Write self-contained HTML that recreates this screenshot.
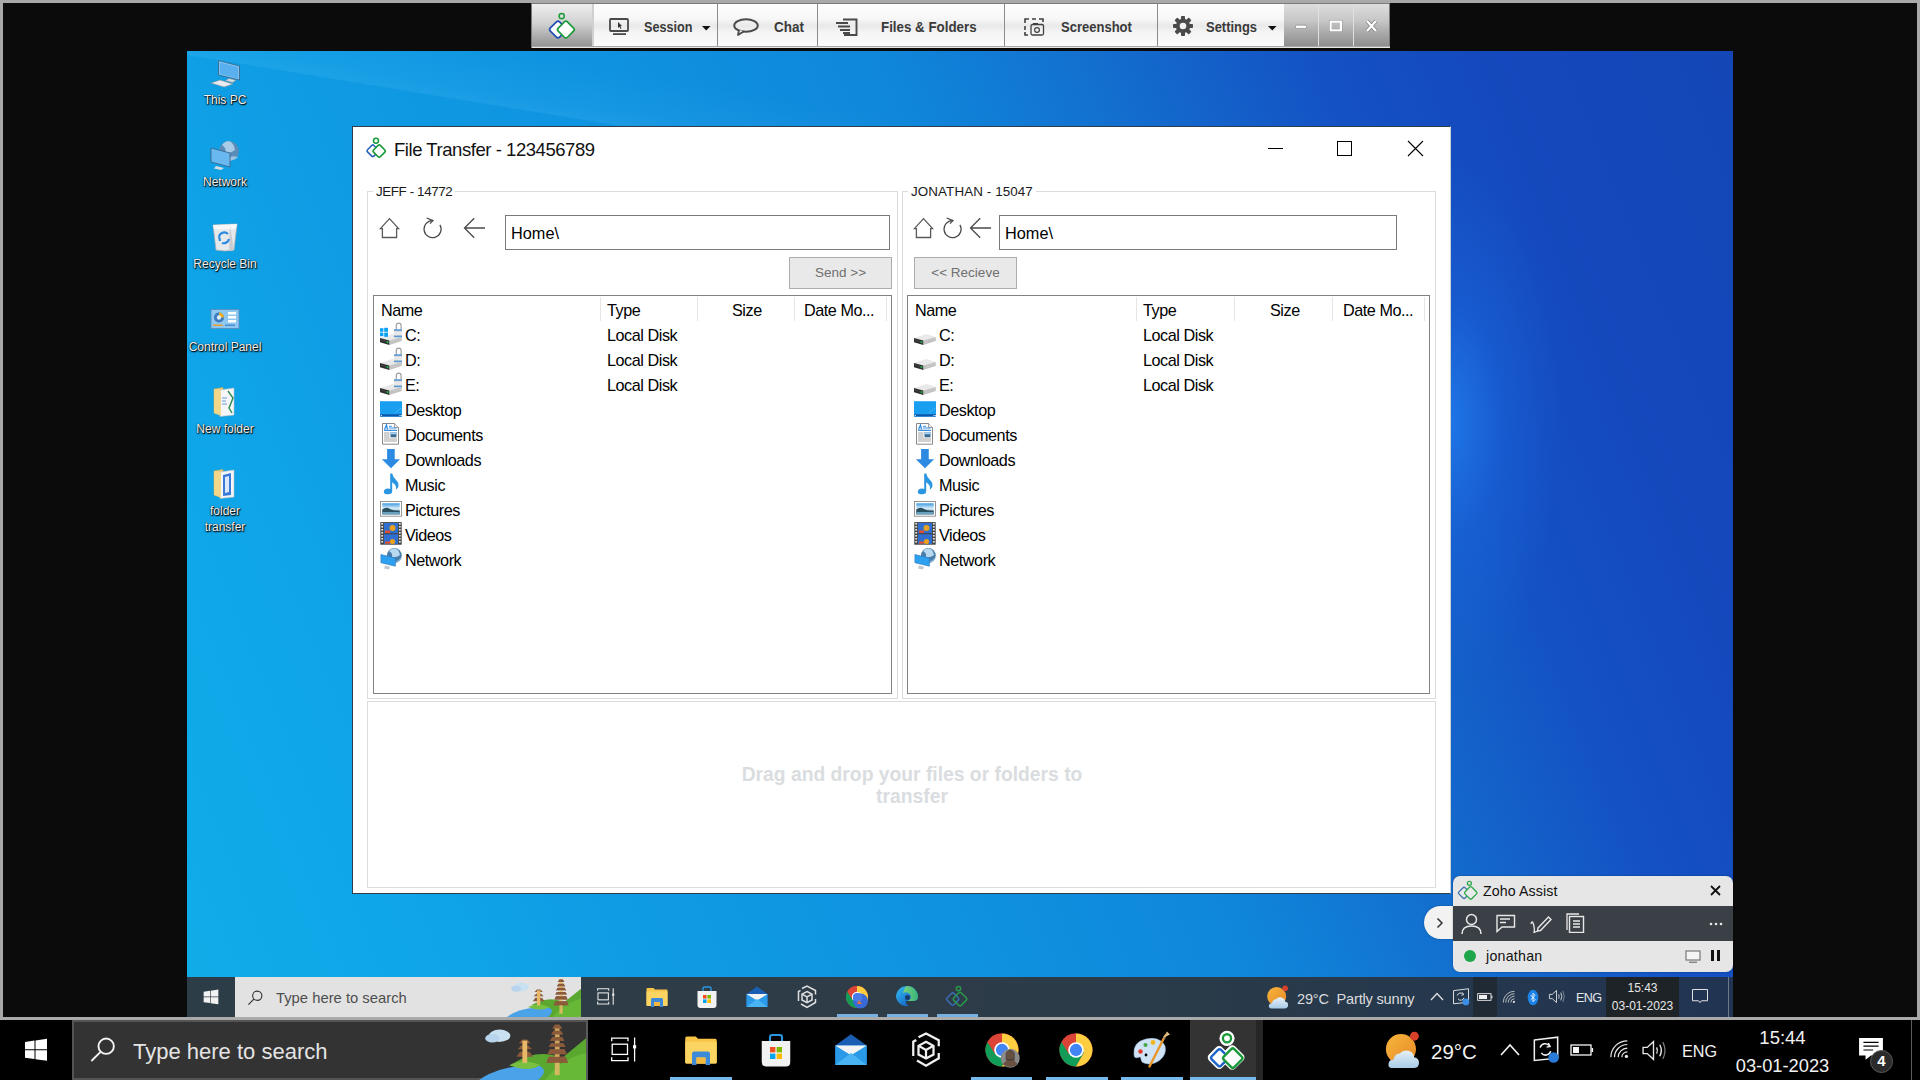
<!DOCTYPE html>
<html><head><meta charset="utf-8">
<style>
*{margin:0;padding:0;box-sizing:border-box}
html,body{width:1920px;height:1080px;overflow:hidden}
body{position:relative;background:#0b0b0b;font-family:"Liberation Sans",sans-serif;color:#000}
.abs{position:absolute}
#bt{left:0;top:0;width:1920px;height:3px;background:#a9a9a9}
#bl{left:0;top:0;width:3px;height:1020px;background:#a9a9a9}
#br{left:1917px;top:0;width:3px;height:1020px;background:#a9a9a9}
#bb{left:0;top:1017px;width:1920px;height:3px;background:#aaaaaa}
#desk{left:187px;top:51px;width:1546px;height:926px;overflow:hidden;
 background:radial-gradient(ellipse 110px 260px at 1265px 370px,rgba(34,128,240,.75) 0%,rgba(30,110,230,.35) 45%,rgba(20,80,200,0) 100%),
 linear-gradient(68deg,#10ace8 0%,#0fa5e8 13%,#0f9de4 22%,#0f93e0 40%,#0f86da 56%,#1370cf 66%,#1452c4 78%,#1448bc 88%,#1446b6 100%)}
#itb{left:187px;top:977px;width:1546px;height:40px;background:linear-gradient(90deg,#2d3d48 0%,#2e3c47 45%,#283a4a 70%,#213452 100%)}
#otb{left:0;top:1020px;width:1920px;height:60px;background:#000}

#tbar{left:531px;top:3px;width:859px;height:45px;background:#7a7a7a}
#tbar .b{position:absolute;top:1px;height:42px;background:linear-gradient(#fefefe 0%,#f7f7f7 35%,#e9e9e9 52%,#f5f5f5 68%,#fbfbfb 100%)}
#tbar .sep{position:absolute;top:1px;width:1px;height:42px;background:#8c8c8c}
#tbar .lbl{position:absolute;top:2px;height:42px;line-height:42px;font-weight:bold;font-size:15.5px;color:#3a3a3a;white-space:nowrap;transform-origin:0 50%}
#tbar .g{position:absolute;top:1px;height:42px;background:linear-gradient(#dedede 0%,#c6c6c6 40%,#a8a8a8 70%,#8e8e8e 100%)}
#tbar .under{position:absolute;left:1px;top:43px;width:858px;height:2px;background:linear-gradient(#a8a8a8 50%,#e6e6e6 50%)}

/* window */
#win{left:352px;top:126px;width:1099px;height:768px;background:#fff;border:1px solid #2d3d4d;border-right-color:#c8d0d8}
.t{position:absolute;white-space:nowrap;line-height:1}
.gb{position:absolute;border:1px solid #dcdcdc}
.gl{position:absolute;background:#fff;padding:0 3px;font-size:13.4px;letter-spacing:-0.4px;color:#1a1a1a;line-height:14px}
.pathbox{position:absolute;border:1px solid #7a7a7a;background:#fff}
.btn{position:absolute;border:1px solid #adadad;background:#e9e9e9;color:#6f6f6f;font-size:13.5px;text-align:center}
.list{position:absolute;border:1px solid #828282;background:#fff;overflow:hidden}
.hsep{position:absolute;width:1px;height:24px;background:#e5e5e5}
.row{position:absolute;font-size:16.2px;letter-spacing:-0.45px;color:#000;line-height:18px;white-space:nowrap}
.dlbl{position:absolute;width:90px;text-align:center;font-size:12px;line-height:14px;color:#f4f4f4;text-shadow:0 0 1px #000,1px 1px 1px rgba(0,0,0,.9),0 1px 2px rgba(0,0,0,.6)}
</style></head><body>
<div id="bt" class="abs"></div><div id="bl" class="abs"></div><div id="br" class="abs"></div><div id="desk" class="abs"><div class="abs" style="left:-60px;top:-62px;width:800px;height:70px;transform:rotate(9.3deg);transform-origin:0 0;background:linear-gradient(180deg,rgba(120,210,255,0) 0%,rgba(120,210,255,.07) 60%,rgba(120,210,255,.12) 78%,rgba(10,140,220,0) 80%)"></div></div><svg class="abs" style="left:208px;top:58px" width="36" height="32" viewBox="0 0 36 32"><path d="M10.5 2.5 L31.5 8 L31.5 22 L10.5 17 Z" fill="#7cc4f4" stroke="#3a6a90" stroke-width="0.9"/><path d="M12 4.5 L30 9.2 L30 20.5 L12 16 Z" fill="#5ab0ee"/><path d="M21 20.5 L28 22.3 L24.5 24.5 L17.5 22.5 Z" fill="#d8dde2" stroke="#8a9098" stroke-width="0.5"/><path d="M3 25 L12 22 L25 26 L16 29 Z" fill="#e8ecf0" stroke="#8a9098" stroke-width="0.6"/></svg><div class="dlbl" style="left:180px;top:93px">This PC</div><svg class="abs" style="left:208px;top:139px" width="36" height="32" viewBox="0 0 36 32"><circle cx="21" cy="12" r="10" fill="#5a8cb8"/><path d="M14 6 Q19 9 17 14 Q22 15 27 11 Q26 4 21 2 Q17 2 14 6Z" fill="#a8cce8"/><path d="M19 19 Q24 16 30 18 Q27 21 21 22Z" fill="#9cc0e0"/><path d="M3 9 L22 14 L22 28 L3 23 Z" fill="#6ab8f0" stroke="#3a6a90" stroke-width="0.9"/><path d="M8 27 L16 29 L13 31 L6 29.5 Z" fill="#d8dde2"/></svg><div class="dlbl" style="left:180px;top:175px">Network</div><svg class="abs" style="left:208px;top:220px" width="34" height="34" viewBox="0 0 34 34"><path d="M5 5 L29 4 L26 30 Q17 32 8 30 Z" fill="#e6e9ec" stroke="#a8adb2" stroke-width="0.8"/><path d="M5 5 L29 4 L28 9 L6 9.5 Z" fill="#f6f7f8"/><path d="M22 6 L26 30 Q24 31 21 31 Z" fill="#c8ccd0"/><path d="M11 16 A5.5 5.5 0 0 1 20 14 M21 19 A5.5 5.5 0 0 1 14 23 M12 21 L11 16" fill="none" stroke="#2a8ae0" stroke-width="2.2"/></svg><div class="dlbl" style="left:180px;top:257px">Recycle Bin</div><svg class="abs" style="left:209px;top:307px" width="32" height="24" viewBox="0 0 32 24"><rect x="2" y="2.5" width="28" height="19" fill="#8ec8f0" stroke="#5a8ab8" stroke-width="0.8"/><circle cx="10" cy="10.5" r="5" fill="#3a7ac0"/><path d="M10 10.5 V5.5 A5 5 0 0 1 15 10.5 Z" fill="#f0b020"/><circle cx="10" cy="10.5" r="2.2" fill="#dbeefc"/><rect x="19" y="5" width="8" height="2.5" fill="#fff"/><rect x="19" y="9" width="8" height="2.5" fill="#fff"/><rect x="19" y="13" width="8" height="2.5" fill="#fff"/><rect x="4" y="17.5" width="10" height="1.5" fill="#e8a030"/><rect x="16" y="17.5" width="10" height="1.5" fill="#4a8ad0"/></svg><div class="dlbl" style="left:180px;top:340px">Control Panel</div><svg class="abs" style="left:210px;top:386px" width="30" height="32" viewBox="0 0 30 32"><path d="M4 3 L13 1.5 L13 29 L4 27 Z" fill="#f0d080" stroke="#c8a850" stroke-width="0.6"/><path d="M10 4 L24 2 L24 29 L10 30.5 Z" fill="#f4f6f8" stroke="#b8bcc0" stroke-width="0.6"/><path d="M18 5 L23 12 L19 22 L22 27" fill="none" stroke="#2a8a50" stroke-width="1.4"/><path d="M12 12 H17 M12 15 H16 M12 18 H17" stroke="#4a8ad0" stroke-width="0.8"/><path d="M4 3 L11 4.5 L11 30 L4 27 Z" fill="#f2d78a" opacity="0.9"/></svg><div class="dlbl" style="left:180px;top:422px">New folder</div><svg class="abs" style="left:210px;top:468px" width="30" height="32" viewBox="0 0 30 32"><path d="M4 3 L13 1.5 L13 29 L4 27 Z" fill="#f0d080" stroke="#c8a850" stroke-width="0.6"/><path d="M10 4 L24 2 L24 29 L10 30.5 Z" fill="#f4f6f8" stroke="#b8bcc0" stroke-width="0.6"/><path d="M13 7 L21 5 L21 27 L13 28 Z" fill="#3a7ad8"/><path d="M15 9 L19 8 L19 24 L15 25 Z" fill="#dbe8f8"/><path d="M4 3 L11 4.5 L11 30 L4 27 Z" fill="#f2d78a" opacity="0.9"/></svg><div class="dlbl" style="left:180px;top:503px;line-height:16px">folder<br>transfer</div><div id="itb" class="abs"></div><div id="bb" class="abs"></div><div id="otb" class="abs"></div><div id="tbar" class="abs">
 <div class="g" style="left:1px;width:60px;background:linear-gradient(#eeeeee 0%,#d2d2d2 45%,#a9a9a9 80%,#959595 100%)">
  <svg width="60" height="42" viewBox="0 0 60 42" style="position:absolute;left:0;top:0">
   <circle cx="29.7" cy="12.1" r="2.6" fill="none" stroke="#1a9a3a" stroke-width="1.5"/>
   <rect x="19.5" y="19" width="13" height="13" rx="2.2" transform="rotate(45 26 25.5)" fill="#fff" stroke="#1f4fb0" stroke-width="1.7"/>
   <rect x="27.4" y="19.1" width="13" height="13" rx="2.2" transform="rotate(45 33.9 25.6)" fill="#fff" stroke="#1a9a3a" stroke-width="1.7"/>
  </svg>
 </div>
 <div class="sep" style="left:61px;background:#d0d0d0;width:2px"></div>
 <div class="b" style="left:63px;width:123px">
  <svg width="22" height="18" viewBox="0 0 22 18" style="position:absolute;left:15px;top:14px">
   <rect x="1" y="1" width="18" height="12" rx="1" fill="none" stroke="#4a4a4a" stroke-width="1.8"/>
   <rect x="4" y="15.2" width="13" height="1.8" fill="#4a4a4a"/>
   <path d="M9 4 L9 10 L10.4 8.7 L11.6 11 L12.5 10.5 L11.3 8.3 L13 8 Z" fill="#333"/>
  </svg>
  <div class="lbl" style="left:50px;transform:scaleX(0.815)">Session</div>
  <svg width="10" height="6" style="position:absolute;left:108px;top:22px"><path d="M0 0 L8.5 0 L4.25 4.5 Z" fill="#111"/></svg>
 </div>
 <div class="sep" style="left:186px"></div>
 <div class="b" style="left:187px;width:99px">
  <svg width="28" height="18" viewBox="0 0 28 18" style="position:absolute;left:15px;top:14px">
   <ellipse cx="13" cy="7.5" rx="11.8" ry="6.3" fill="none" stroke="#4a4a4a" stroke-width="1.9"/>
   <path d="M6 12 L5 17 L11 13.2" fill="#f4f4f4" stroke="#4a4a4a" stroke-width="1.8" stroke-linejoin="round"/>
  </svg>
  <div class="lbl" style="left:56px;transform:scaleX(0.87)">Chat</div>
 </div>
 <div class="sep" style="left:286px"></div>
 <div class="b" style="left:287px;width:186px">
  <svg width="24" height="18" viewBox="0 0 24 18" style="position:absolute;left:17px;top:14px">
   <path d="M8 1.5 H21.5 V17 H9" fill="none" stroke="#4a4a4a" stroke-width="1.9"/>
   <path d="M1 5 H13 M3 8.5 H15 M5 12 H15 M8 15 H15" stroke="#4a4a4a" stroke-width="1.9"/>
  </svg>
  <div class="lbl" style="left:63px;transform:scaleX(0.86)">Files &amp; Folders</div>
 </div>
 <div class="sep" style="left:473px"></div>
 <div class="b" style="left:474px;width:152px">
  <svg width="22" height="18" viewBox="0 0 22 18" style="position:absolute;left:19px;top:14px">
   <path d="M1 5 V1 H5 M8 1 H12 M15 1 H19 V4 M1 8 V12 M1 14 V17 H4" fill="none" stroke="#404040" stroke-width="1.6"/>
   <rect x="7" y="6.5" width="12.5" height="10.5" rx="1.5" fill="none" stroke="#404040" stroke-width="1.3"/>
   <rect x="9" y="5" width="5" height="1.6" fill="#404040"/>
   <circle cx="13" cy="12" r="2.4" fill="none" stroke="#404040" stroke-width="1.2"/>
  </svg>
  <div class="lbl" style="left:56px;transform:scaleX(0.84)">Screenshot</div>
 </div>
 <div class="sep" style="left:626px"></div>
 <div class="b" style="left:627px;width:126px">
  <svg width="22" height="22" viewBox="0 0 22 22" style="position:absolute;left:14px;top:11px">
   <g fill="#4a4a4a" transform="translate(11 11)">
    <circle r="7.2"/>
    <rect x="-2" y="-10" width="4" height="20" rx="0.8"/>
    <rect x="-2" y="-10" width="4" height="20" rx="0.8" transform="rotate(45)"/>
    <rect x="-2" y="-10" width="4" height="20" rx="0.8" transform="rotate(90)"/>
    <rect x="-2" y="-10" width="4" height="20" rx="0.8" transform="rotate(135)"/>
   </g>
   <circle cx="11" cy="11" r="3.3" fill="#f2f2f2"/>
  </svg>
  <div class="lbl" style="left:48px;transform:scaleX(0.835)">Settings</div>
  <svg width="10" height="6" style="position:absolute;left:110px;top:22px"><path d="M0 0 L8.5 0 L4.25 4.5 Z" fill="#111"/></svg>
 </div>
 <div class="g" style="left:753px;width:34px">
  <svg width="34" height="42" style="position:absolute;left:0;top:0"><rect x="11.5" y="21.2" width="11" height="3.2" rx="1" fill="#fff" stroke="#777" stroke-width="0.6"/></svg>
 </div>
 <div class="sep" style="left:787px;background:#e0e0e0"></div>
 <div class="g" style="left:788px;width:34px">
  <svg width="34" height="42" style="position:absolute;left:0;top:0"><rect x="11.5" y="17.5" width="10.5" height="9" fill="none" stroke="#fff" stroke-width="2.2"/><rect x="10.2" y="16.2" width="13.1" height="11.6" fill="none" stroke="#888" stroke-width="0.4"/></svg>
 </div>
 <div class="sep" style="left:822px;background:#e0e0e0"></div>
 <div class="g" style="left:823px;width:35px">
  <svg width="35" height="42" style="position:absolute;left:0;top:0"><path d="M13 17 L22 27 M22 17 L13 27" stroke="#777" stroke-width="3.6"/><path d="M13 17 L22 27 M22 17 L13 27" stroke="#fff" stroke-width="2.4"/></svg>
 </div>
 <div class="under"></div>
</div>
<div id="win" class="abs"></div><svg class="abs" style="left:364px;top:134px" width="26" height="26" viewBox="0 0 26 26"><circle cx="12" cy="6.7" r="2.5" fill="none" stroke="#1a9a3a" stroke-width="1.5"/><rect x="4.3" y="12.3" width="9" height="9" rx="1.5" transform="rotate(45 8.8 16.8)" fill="#fff" stroke="#2a62b8" stroke-width="1.6"/><rect x="10.5" y="12.3" width="9.5" height="9.5" rx="1.5" transform="rotate(45 15.2 17)" fill="#fff" stroke="#1a9a3a" stroke-width="1.7"/></svg><div class="t" style="left:394px;top:141px;font-size:18.5px;letter-spacing:-0.45px;color:#111">File Transfer - 123456789</div><div class="abs" style="left:1268px;top:148px;width:15px;height:1px;background:#000"></div><div class="abs" style="left:1337px;top:141px;width:15px;height:15px;border:1.2px solid #000"></div><svg class="abs" style="left:1407px;top:140px" width="17" height="17" viewBox="0 0 17 17"><path d="M1 1 L16 16 M16 1 L1 16" stroke="#000" stroke-width="1.1"/></svg><div class="gb" style="left:367px;top:191px;width:531px;height:508px"></div><div class="gl abs" style="left:373px;top:185px">JEFF - 14772</div><div class="gb" style="left:902px;top:191px;width:534px;height:508px"></div><div class="gl abs" style="left:908px;top:185px;letter-spacing:0.1px">JONATHAN - 15047</div><svg class="abs" style="left:379px;top:217px" width="22" height="22" viewBox="0 0 22 22"><path d="M3.4 20.5 V11.6 H1.4 L10.5 1.6 L19.6 11.6 H17.6 V20.5 Z" fill="none" stroke="#5a5a5a" stroke-width="1.3" stroke-linejoin="miter"/></svg><svg class="abs" style="left:421px;top:217px" width="22" height="22" viewBox="0 0 22 22"><path d="M11.5 3.6 A8.5 8.5 0 1 0 18.9 7.8" fill="none" stroke="#4a4a4a" stroke-width="1.3"/><path d="M5.6 1 L12 3.6 L9 6.6" fill="none" stroke="#4a4a4a" stroke-width="1.3"/></svg><svg class="abs" style="left:463px;top:217px" width="24" height="22" viewBox="0 0 24 22"><path d="M1.5 11 H22 M11.2 1.2 L1.5 11 L11.2 20.8" fill="none" stroke="#4a4a4a" stroke-width="1.3"/></svg><div class="pathbox" style="left:505px;top:215px;width:385px;height:35px"></div><div class="t" style="left:511px;top:225px;font-size:16.3px">Home\</div><div class="btn" style="left:789px;top:257px;width:103px;height:32px;line-height:30px">Send &gt;&gt;</div><svg class="abs" style="left:913px;top:217px" width="22" height="22" viewBox="0 0 22 22"><path d="M3.4 20.5 V11.6 H1.4 L10.5 1.6 L19.6 11.6 H17.6 V20.5 Z" fill="none" stroke="#5a5a5a" stroke-width="1.3" stroke-linejoin="miter"/></svg><svg class="abs" style="left:941px;top:217px" width="22" height="22" viewBox="0 0 22 22"><path d="M11.5 3.6 A8.5 8.5 0 1 0 18.9 7.8" fill="none" stroke="#4a4a4a" stroke-width="1.3"/><path d="M5.6 1 L12 3.6 L9 6.6" fill="none" stroke="#4a4a4a" stroke-width="1.3"/></svg><svg class="abs" style="left:969px;top:217px" width="24" height="22" viewBox="0 0 24 22"><path d="M1.5 11 H22 M11.2 1.2 L1.5 11 L11.2 20.8" fill="none" stroke="#4a4a4a" stroke-width="1.3"/></svg><div class="pathbox" style="left:999px;top:215px;width:398px;height:35px"></div><div class="t" style="left:1005px;top:225px;font-size:16.3px">Home\</div><div class="btn" style="left:914px;top:257px;width:103px;height:32px;line-height:30px">&lt;&lt; Recieve</div><div class="list" style="left:373px;top:295px;width:519px;height:399px"></div><div class="hsep abs" style="left:600px;top:297px"></div><div class="hsep abs" style="left:697px;top:297px"></div><div class="hsep abs" style="left:794px;top:297px"></div><div class="hsep abs" style="left:886px;top:297px"></div><div class="row" style="left:381px;top:301px">Name</div><div class="row" style="left:607px;top:301px">Type</div><div class="row" style="left:732px;top:301px">Size</div><div class="row" style="left:804px;top:301px">Date Mo...</div><svg class="abs" style="left:380px;top:321px" width="22" height="28" viewBox="0 -4 22 28"><path d="M0 13 L12.5 9 L21.8 12 L9.3 15.5 Z" fill="#e9e9e9"/><path d="M9.3 15.5 L21.8 12 L21.8 16 L9.3 20 Z" fill="#c4c4c4"/><path d="M0 13 L9.3 15.5 L9.3 20 L0 17.3 Z" fill="#2e2e2e"/><path d="M0.8 15 L8.5 17.2" stroke="#555" stroke-width="0.6"/><rect x="6.6" y="16.2" width="1.8" height="2" fill="#1eb04a"/><path d="M16.3 5 V0.6 A2.4 2.4 0 0 1 21.1 0.6 V5" fill="none" stroke="#a0a0a0" stroke-width="1.2"/><rect x="14" y="4.3" width="8.8" height="8" fill="#d4d4d4"/><rect x="14" y="4.3" width="8.8" height="1.6" fill="#5a9ad8"/><rect x="14" y="10.6" width="8.8" height="1.6" fill="#5a9ad8"/><rect x="14" y="6.5" width="8.8" height="3.6" fill="#e8e8e8"/><g fill="#0aa2f0"><rect x="0" y="3.2" width="3.4" height="3.6"/><rect x="4.2" y="2.8" width="3.8" height="4"/><rect x="0" y="7.6" width="3.4" height="3.6"/><rect x="4.2" y="7.6" width="3.8" height="4.2"/></g></svg><div class="row" style="left:405px;top:326px">C:</div><div class="row" style="left:607px;top:326px">Local Disk</div><svg class="abs" style="left:380px;top:346px" width="22" height="28" viewBox="0 -4 22 28"><path d="M0 13 L12.5 9 L21.8 12 L9.3 15.5 Z" fill="#e9e9e9"/><path d="M9.3 15.5 L21.8 12 L21.8 16 L9.3 20 Z" fill="#c4c4c4"/><path d="M0 13 L9.3 15.5 L9.3 20 L0 17.3 Z" fill="#2e2e2e"/><path d="M0.8 15 L8.5 17.2" stroke="#555" stroke-width="0.6"/><rect x="6.6" y="16.2" width="1.8" height="2" fill="#1eb04a"/><path d="M16.3 5 V0.6 A2.4 2.4 0 0 1 21.1 0.6 V5" fill="none" stroke="#a0a0a0" stroke-width="1.2"/><rect x="14" y="4.3" width="8.8" height="8" fill="#d4d4d4"/><rect x="14" y="4.3" width="8.8" height="1.6" fill="#5a9ad8"/><rect x="14" y="10.6" width="8.8" height="1.6" fill="#5a9ad8"/><rect x="14" y="6.5" width="8.8" height="3.6" fill="#e8e8e8"/></svg><div class="row" style="left:405px;top:351px">D:</div><div class="row" style="left:607px;top:351px">Local Disk</div><svg class="abs" style="left:380px;top:371px" width="22" height="28" viewBox="0 -4 22 28"><path d="M0 13 L12.5 9 L21.8 12 L9.3 15.5 Z" fill="#e9e9e9"/><path d="M9.3 15.5 L21.8 12 L21.8 16 L9.3 20 Z" fill="#c4c4c4"/><path d="M0 13 L9.3 15.5 L9.3 20 L0 17.3 Z" fill="#2e2e2e"/><path d="M0.8 15 L8.5 17.2" stroke="#555" stroke-width="0.6"/><rect x="6.6" y="16.2" width="1.8" height="2" fill="#1eb04a"/><path d="M16.3 5 V0.6 A2.4 2.4 0 0 1 21.1 0.6 V5" fill="none" stroke="#a0a0a0" stroke-width="1.2"/><rect x="14" y="4.3" width="8.8" height="8" fill="#d4d4d4"/><rect x="14" y="4.3" width="8.8" height="1.6" fill="#5a9ad8"/><rect x="14" y="10.6" width="8.8" height="1.6" fill="#5a9ad8"/><rect x="14" y="6.5" width="8.8" height="3.6" fill="#e8e8e8"/></svg><div class="row" style="left:405px;top:376px">E:</div><div class="row" style="left:607px;top:376px">Local Disk</div><svg class="abs" style="left:380px;top:396px" width="22" height="28" viewBox="0 -4 22 28"><rect x="0" y="1.2" width="22" height="15.5" fill="#199ef0"/><rect x="0.3" y="14.3" width="21.4" height="2.2" fill="#0a56a8"/><rect x="0.8" y="15" width="1" height="1" fill="#fff"/><rect x="19.5" y="15" width="1" height="1" fill="#fff"/><rect x="21" y="15" width="0.8" height="1" fill="#fff"/><path d="M15 13 L21 8" stroke="#8fd0fa" stroke-width="0.6" opacity="0.7"/></svg><div class="row" style="left:405px;top:401px">Desktop</div><svg class="abs" style="left:380px;top:421px" width="22" height="28" viewBox="0 -4 22 28"><path d="M2.5 -1.5 H14.5 L18.5 2.5 V19.2 H2.5 Z" fill="#fff" stroke="#7a7a7a" stroke-width="0.9"/><path d="M14.5 -1.5 V2.5 H18.5" fill="#eee" stroke="#7a7a7a" stroke-width="0.7"/><path d="M4.5 4.5 L6.5 0 L7.5 4.5" fill="none" stroke="#2a88e0" stroke-width="1.2"/><path d="M9 1.3 H12 M9 3 H16.5" stroke="#2a88e0" stroke-width="0.9"/><path d="M4 5.3 H17" stroke="#1a7ad8" stroke-width="1.1"/><path d="M4 8 H9.5 M4 10 H9.5 M4 12 H9.5 M4 14 H17 M4 16 H17" stroke="#8a8a8a" stroke-width="0.8"/><rect x="10.5" y="7.3" width="6" height="5" fill="#3a6a90"/><rect x="10.5" y="7.3" width="6" height="2" fill="#a8d0f0"/></svg><div class="row" style="left:405px;top:426px">Documents</div><svg class="abs" style="left:380px;top:446px" width="22" height="28" viewBox="0 -4 22 28"><path d="M7.1 -0.9 H14.75 V9.2 H20 L11 18.2 L1.9 9.2 H7.1 Z" fill="#2d8ae2"/></svg><div class="row" style="left:405px;top:451px">Downloads</div><svg class="abs" style="left:380px;top:471px" width="22" height="28" viewBox="0 -4 22 28"><path d="M10.2 -1.6 H12.2 Q13 2.5 16.5 5.5 Q19.5 8.5 18 12.5 Q17 14 15.8 14.5 Q17.2 10.5 12.2 7.3 V16 Q12.2 19.5 8 19.3 Q3.8 19.3 3.8 17 Q3.8 13.8 8 13.6 Q9.5 13.6 10.2 14.1 Z" fill="#2a96e2"/></svg><div class="row" style="left:405px;top:476px">Music</div><svg class="abs" style="left:380px;top:496px" width="22" height="28" viewBox="0 -4 22 28"><rect x="0.5" y="1.5" width="21" height="14.7" fill="#fff" stroke="#8a8a8a" stroke-width="0.9"/><defs><linearGradient id="sky" x1="0" y1="0" x2="0" y2="1"><stop offset="0" stop-color="#3a98e0"/><stop offset="0.45" stop-color="#d8ecf8"/><stop offset="1" stop-color="#5a90b0"/></linearGradient></defs><rect x="2.3" y="3.3" width="17.4" height="11" fill="url(#sky)"/><path d="M2.3 9.5 Q6 6.5 10 9 Q14 11 19.7 10.5 V14.3 H2.3 Z" fill="#2a5060"/><path d="M2.3 12 H19.7 V14.3 H2.3Z" fill="#6aa0c0"/></svg><div class="row" style="left:405px;top:501px">Pictures</div><svg class="abs" style="left:380px;top:521px" width="22" height="28" viewBox="0 -4 22 28"><rect x="0.3" y="-2.9" width="21.4" height="22.6" fill="#444"/><rect x="4" y="-2" width="14" height="10.2" fill="#2f6fd0"/><rect x="4" y="9.2" width="14" height="9.8" fill="#2f6fd0"/><circle cx="12.5" cy="3" r="3" fill="#e8a020"/><rect x="5" y="5.5" width="5" height="2.5" fill="#e05030"/><circle cx="12.5" cy="16.5" r="2.6" fill="#e8a020"/><rect x="5" y="16.5" width="5" height="2.2" fill="#e05030"/><g fill="#e8e8e8"><rect x="1.3" y="-2" width="1.8" height="1.6"/><rect x="1.3" y="1" width="1.8" height="1.6"/><rect x="1.3" y="4" width="1.8" height="1.6"/><rect x="1.3" y="7" width="1.8" height="1.6"/><rect x="1.3" y="10" width="1.8" height="1.6"/><rect x="1.3" y="13" width="1.8" height="1.6"/><rect x="1.3" y="16" width="1.8" height="1.6"/><rect x="18.9" y="-2" width="1.8" height="1.6"/><rect x="18.9" y="1" width="1.8" height="1.6"/><rect x="18.9" y="4" width="1.8" height="1.6"/><rect x="18.9" y="7" width="1.8" height="1.6"/><rect x="18.9" y="10" width="1.8" height="1.6"/><rect x="18.9" y="13" width="1.8" height="1.6"/><rect x="18.9" y="16" width="1.8" height="1.6"/></g></svg><div class="row" style="left:405px;top:526px">Videos</div><svg class="abs" style="left:380px;top:546px" width="22" height="28" viewBox="0 -4 22 28"><circle cx="14.35" cy="5.5" r="7.4" fill="#4a7eaa"/><path d="M9 1 Q13 3 12 7 Q16 8 20 5 Q19 -1 14.5 -1.8 Q11 -1.8 9 1Z" fill="#b8d8f0"/><path d="M15 12 Q19 10 21.5 7.5 Q21 11 16 12.8Z" fill="#8ab8e0"/><path d="M0.9 4.5 L15.4 8 L15.4 16.2 L0.9 12.7 Z" fill="#2ea0f0" stroke="#2a78b8" stroke-width="0.6"/><path d="M5 15.5 L10 16.8 L9 19.6 L4 18.5 Z" fill="#c0c8d0"/></svg><div class="row" style="left:405px;top:551px">Network</div><div class="list" style="left:907px;top:295px;width:523px;height:399px"></div><div class="hsep abs" style="left:1136px;top:297px"></div><div class="hsep abs" style="left:1234px;top:297px"></div><div class="hsep abs" style="left:1332px;top:297px"></div><div class="hsep abs" style="left:1424px;top:297px"></div><div class="row" style="left:915px;top:301px">Name</div><div class="row" style="left:1143px;top:301px">Type</div><div class="row" style="left:1270px;top:301px">Size</div><div class="row" style="left:1343px;top:301px">Date Mo...</div><svg class="abs" style="left:914px;top:321px" width="22" height="28" viewBox="0 -4 22 28"><path d="M0 13 L12.5 9 L21.8 12 L9.3 15.5 Z" fill="#e9e9e9"/><path d="M9.3 15.5 L21.8 12 L21.8 16 L9.3 20 Z" fill="#c4c4c4"/><path d="M0 13 L9.3 15.5 L9.3 20 L0 17.3 Z" fill="#2e2e2e"/><path d="M0.8 15 L8.5 17.2" stroke="#555" stroke-width="0.6"/><rect x="6.6" y="16.2" width="1.8" height="2" fill="#1eb04a"/></svg><div class="row" style="left:939px;top:326px">C:</div><div class="row" style="left:1143px;top:326px">Local Disk</div><svg class="abs" style="left:914px;top:346px" width="22" height="28" viewBox="0 -4 22 28"><path d="M0 13 L12.5 9 L21.8 12 L9.3 15.5 Z" fill="#e9e9e9"/><path d="M9.3 15.5 L21.8 12 L21.8 16 L9.3 20 Z" fill="#c4c4c4"/><path d="M0 13 L9.3 15.5 L9.3 20 L0 17.3 Z" fill="#2e2e2e"/><path d="M0.8 15 L8.5 17.2" stroke="#555" stroke-width="0.6"/><rect x="6.6" y="16.2" width="1.8" height="2" fill="#1eb04a"/></svg><div class="row" style="left:939px;top:351px">D:</div><div class="row" style="left:1143px;top:351px">Local Disk</div><svg class="abs" style="left:914px;top:371px" width="22" height="28" viewBox="0 -4 22 28"><path d="M0 13 L12.5 9 L21.8 12 L9.3 15.5 Z" fill="#e9e9e9"/><path d="M9.3 15.5 L21.8 12 L21.8 16 L9.3 20 Z" fill="#c4c4c4"/><path d="M0 13 L9.3 15.5 L9.3 20 L0 17.3 Z" fill="#2e2e2e"/><path d="M0.8 15 L8.5 17.2" stroke="#555" stroke-width="0.6"/><rect x="6.6" y="16.2" width="1.8" height="2" fill="#1eb04a"/></svg><div class="row" style="left:939px;top:376px">E:</div><div class="row" style="left:1143px;top:376px">Local Disk</div><svg class="abs" style="left:914px;top:396px" width="22" height="28" viewBox="0 -4 22 28"><rect x="0" y="1.2" width="22" height="15.5" fill="#199ef0"/><rect x="0.3" y="14.3" width="21.4" height="2.2" fill="#0a56a8"/><rect x="0.8" y="15" width="1" height="1" fill="#fff"/><rect x="19.5" y="15" width="1" height="1" fill="#fff"/><rect x="21" y="15" width="0.8" height="1" fill="#fff"/><path d="M15 13 L21 8" stroke="#8fd0fa" stroke-width="0.6" opacity="0.7"/></svg><div class="row" style="left:939px;top:401px">Desktop</div><svg class="abs" style="left:914px;top:421px" width="22" height="28" viewBox="0 -4 22 28"><path d="M2.5 -1.5 H14.5 L18.5 2.5 V19.2 H2.5 Z" fill="#fff" stroke="#7a7a7a" stroke-width="0.9"/><path d="M14.5 -1.5 V2.5 H18.5" fill="#eee" stroke="#7a7a7a" stroke-width="0.7"/><path d="M4.5 4.5 L6.5 0 L7.5 4.5" fill="none" stroke="#2a88e0" stroke-width="1.2"/><path d="M9 1.3 H12 M9 3 H16.5" stroke="#2a88e0" stroke-width="0.9"/><path d="M4 5.3 H17" stroke="#1a7ad8" stroke-width="1.1"/><path d="M4 8 H9.5 M4 10 H9.5 M4 12 H9.5 M4 14 H17 M4 16 H17" stroke="#8a8a8a" stroke-width="0.8"/><rect x="10.5" y="7.3" width="6" height="5" fill="#3a6a90"/><rect x="10.5" y="7.3" width="6" height="2" fill="#a8d0f0"/></svg><div class="row" style="left:939px;top:426px">Documents</div><svg class="abs" style="left:914px;top:446px" width="22" height="28" viewBox="0 -4 22 28"><path d="M7.1 -0.9 H14.75 V9.2 H20 L11 18.2 L1.9 9.2 H7.1 Z" fill="#2d8ae2"/></svg><div class="row" style="left:939px;top:451px">Downloads</div><svg class="abs" style="left:914px;top:471px" width="22" height="28" viewBox="0 -4 22 28"><path d="M10.2 -1.6 H12.2 Q13 2.5 16.5 5.5 Q19.5 8.5 18 12.5 Q17 14 15.8 14.5 Q17.2 10.5 12.2 7.3 V16 Q12.2 19.5 8 19.3 Q3.8 19.3 3.8 17 Q3.8 13.8 8 13.6 Q9.5 13.6 10.2 14.1 Z" fill="#2a96e2"/></svg><div class="row" style="left:939px;top:476px">Music</div><svg class="abs" style="left:914px;top:496px" width="22" height="28" viewBox="0 -4 22 28"><rect x="0.5" y="1.5" width="21" height="14.7" fill="#fff" stroke="#8a8a8a" stroke-width="0.9"/><defs><linearGradient id="sky" x1="0" y1="0" x2="0" y2="1"><stop offset="0" stop-color="#3a98e0"/><stop offset="0.45" stop-color="#d8ecf8"/><stop offset="1" stop-color="#5a90b0"/></linearGradient></defs><rect x="2.3" y="3.3" width="17.4" height="11" fill="url(#sky)"/><path d="M2.3 9.5 Q6 6.5 10 9 Q14 11 19.7 10.5 V14.3 H2.3 Z" fill="#2a5060"/><path d="M2.3 12 H19.7 V14.3 H2.3Z" fill="#6aa0c0"/></svg><div class="row" style="left:939px;top:501px">Pictures</div><svg class="abs" style="left:914px;top:521px" width="22" height="28" viewBox="0 -4 22 28"><rect x="0.3" y="-2.9" width="21.4" height="22.6" fill="#444"/><rect x="4" y="-2" width="14" height="10.2" fill="#2f6fd0"/><rect x="4" y="9.2" width="14" height="9.8" fill="#2f6fd0"/><circle cx="12.5" cy="3" r="3" fill="#e8a020"/><rect x="5" y="5.5" width="5" height="2.5" fill="#e05030"/><circle cx="12.5" cy="16.5" r="2.6" fill="#e8a020"/><rect x="5" y="16.5" width="5" height="2.2" fill="#e05030"/><g fill="#e8e8e8"><rect x="1.3" y="-2" width="1.8" height="1.6"/><rect x="1.3" y="1" width="1.8" height="1.6"/><rect x="1.3" y="4" width="1.8" height="1.6"/><rect x="1.3" y="7" width="1.8" height="1.6"/><rect x="1.3" y="10" width="1.8" height="1.6"/><rect x="1.3" y="13" width="1.8" height="1.6"/><rect x="1.3" y="16" width="1.8" height="1.6"/><rect x="18.9" y="-2" width="1.8" height="1.6"/><rect x="18.9" y="1" width="1.8" height="1.6"/><rect x="18.9" y="4" width="1.8" height="1.6"/><rect x="18.9" y="7" width="1.8" height="1.6"/><rect x="18.9" y="10" width="1.8" height="1.6"/><rect x="18.9" y="13" width="1.8" height="1.6"/><rect x="18.9" y="16" width="1.8" height="1.6"/></g></svg><div class="row" style="left:939px;top:526px">Videos</div><svg class="abs" style="left:914px;top:546px" width="22" height="28" viewBox="0 -4 22 28"><circle cx="14.35" cy="5.5" r="7.4" fill="#4a7eaa"/><path d="M9 1 Q13 3 12 7 Q16 8 20 5 Q19 -1 14.5 -1.8 Q11 -1.8 9 1Z" fill="#b8d8f0"/><path d="M15 12 Q19 10 21.5 7.5 Q21 11 16 12.8Z" fill="#8ab8e0"/><path d="M0.9 4.5 L15.4 8 L15.4 16.2 L0.9 12.7 Z" fill="#2ea0f0" stroke="#2a78b8" stroke-width="0.6"/><path d="M5 15.5 L10 16.8 L9 19.6 L4 18.5 Z" fill="#c0c8d0"/></svg><div class="row" style="left:939px;top:551px">Network</div><div class="gb" style="left:367px;top:701px;width:1069px;height:187px"></div><div class="abs" style="left:367px;top:764px;width:1090px;text-align:center;font-weight:bold;font-size:19.3px;line-height:22px;color:#dadde0">Drag and drop your files or folders to<br>transfer</div><svg class="abs" style="left:203px;top:989px" width="16" height="16" viewBox="0 0 24 24"><path d="M1 4 L10.5 2.6 V11.3 H1 Z M11.5 2.5 L23 0.8 V11.3 H11.5 Z M1 12.3 H10.5 V21 L1 19.7 Z M11.5 12.3 H23 V22.8 L11.5 21.2 Z" fill="#f2f2f2"/></svg><div class="abs" style="left:235px;top:977px;width:346px;height:40px;background:#e2e2e2"></div><svg class="abs" style="left:247px;top:989px" width="17" height="17" viewBox="0 0 24 24"><circle cx="14.5" cy="9.5" r="6.5" fill="none" stroke="#333" stroke-width="1.6"/><path d="M10 14 L2 22" stroke="#333" stroke-width="1.6"/></svg><div class="t" style="left:276px;top:990px;font-size:14.8px;color:#4e4e4e;line-height:16px">Type here to search</div><svg class="abs" style="left:498px;top:977px" width="83" height="40" viewBox="0 0 100 48" preserveAspectRatio="none"><ellipse cx="56" cy="60" rx="52" ry="24" fill="#4aa3e8"/><path d="M40 34 Q60 22 80 30 L100 14 V48 H60 Q70 40 60 36 Z" fill="#5aa830"/><path d="M36 36 Q48 30 62 36 Q52 42 36 36Z" fill="#7ac040"/><path d="M66 48 Q80 30 100 26 V48 Z" fill="#68b838"/><ellipse cx="28" cy="12" rx="9" ry="5" fill="#c8e0f0"/><ellipse cx="22" cy="14" rx="6" ry="3.5" fill="#b8d4ec"/><g fill="#8a5a3a"><path d="M44 18 H54 L51 15 H47Z"/><path d="M43 23 H55 L52 20 H46Z"/><path d="M42 29 H56 L53 25 H45Z"/></g><rect x="47" y="16" width="4" height="18" fill="#e8b868"/><g fill="#8a5a3a"><path d="M72 6 H80 L78 3 H74Z"/><path d="M71 11 H81 L79 8 H73Z"/><path d="M70 16 H82 L80 13 H72Z"/><path d="M69 21 H83 L81 18 H71Z"/><path d="M68 27 H84 L82 23 H70Z"/><path d="M67 34 H85 L83 29 H69Z"/></g><rect x="74" y="4" width="4" height="40" fill="#e8b868" opacity="0.85"/><g fill="#8a5a3a"><path d="M72 6 H80 L78 3 H74Z"/><path d="M71 11 H81 L79 8 H73Z"/><path d="M70 16 H82 L80 13 H72Z"/><path d="M69 21 H83 L81 18 H71Z"/><path d="M68 27 H84 L82 23 H70Z"/><path d="M67 34 H85 L83 29 H69Z"/></g></svg><svg class="abs" style="left:597px;top:988px" width="18" height="17" viewBox="0 0 26 25"><g fill="none" stroke="#e8e8e8" stroke-width="1.6"><path d="M0.7 4.2 V1.2 H17 V4.2"/><rect x="1.2" y="7.2" width="15.3" height="10.2"/><path d="M0.7 20.3 V23.6 H17 V20.3"/><path d="M23.6 0.5 V24.5"/></g><rect x="22" y="8.2" width="3.2" height="3.2" fill="#e8e8e8"/></svg><svg class="abs" style="left:645px;top:985px" width="24" height="24" viewBox="0 0 24 24"><path d="M1.5 4 Q1.5 3 2.5 3 H8.5 L10 4.5 H21.5 Q22.5 4.5 22.5 5.5 V20 Q22.5 21 21.5 21 H2.5 Q1.5 21 1.5 20 Z" fill="#f7c548"/><path d="M1.5 6.5 H22.5 V20 Q22.5 21 21.5 21 H2.5 Q1.5 21 1.5 20 Z" fill="#fcd462"/><path d="M6 22 V14.5 Q6 13 7.5 13 H16.5 Q18 13 18 14.5 V22 H15 V17 H9 V22 Z" fill="#3c8ad8"/><rect x="9" y="17" width="6" height="4" fill="#f4b840"/></svg><svg class="abs" style="left:695px;top:985px" width="24" height="24" viewBox="0 0 24 24"><path d="M8 6 V3.5 Q8 2 9.5 2 H14.5 Q16 2 16 3.5 V6" fill="none" stroke="#2a96e0" stroke-width="1.4"/><path d="M2.5 6 H21.5 V20 Q21.5 23 18.5 23 H5.5 Q2.5 23 2.5 20 Z" fill="#f2f2f2"/><rect x="8" y="10" width="3.6" height="3.6" fill="#f25022"/><rect x="12.4" y="10" width="3.6" height="3.6" fill="#7fba00"/><rect x="8" y="14.4" width="3.6" height="3.6" fill="#00a4ef"/><rect x="12.4" y="14.4" width="3.6" height="3.6" fill="#ffb900"/></svg><svg class="abs" style="left:745px;top:985px" width="24" height="24" viewBox="0 0 24 24"><path d="M1.5 9 L12 1.5 L22.5 9 V22 H1.5 Z" fill="#1a5fb4"/><path d="M1.5 9 H22.5 V22 H1.5 Z" fill="#2a9ae8"/><path d="M1.5 9 L12 15.5 L22.5 9 Z" fill="#f4f4f4"/><path d="M1.5 22 L12 14 L22.5 22 Z" fill="#48b4f4"/></svg><svg class="abs" style="left:795px;top:985px" width="24" height="24" viewBox="0 0 24 24"><g fill="none" stroke="#e0e0e0" stroke-width="1.5"><path d="M7 3.5 L12 1 L20.5 5.5 V9.5"/><path d="M3.5 16 V6.5 L5.5 5.3"/><path d="M20.5 14 V17.5 L12 22.5 L6 19"/><path d="M12 6.5 L17 9.2 V15 L12 17.7 L7 15 V9.2 Z"/><path d="M7 9.2 L12 12 L17 9.2 M12 12 V17.7"/></g></svg><svg class="abs" style="left:845px;top:985px" width="24" height="24" viewBox="0 0 24 24"><circle cx="12" cy="12" r="11" fill="#db4437"/><path d="M12 12 L2.5 17.5 A11 11 0 0 0 12 23 L 17.5 13.5 Z" fill="#0f9d58"/><path d="M12 12 L2.5 17.5 A11 11 0 0 1 2.3 6.6 L7.2 14.5 Z" fill="#0f9d58"/><path d="M12 12 L23 12 A11 11 0 0 1 12 23 L17.5 13.5 Z" fill="#ffcd40"/><path d="M12 1 A11 11 0 0 1 23 12 H12 Z" fill="#ffcd40"/><path d="M12 1 A11 11 0 0 0 2.3 6.6 L7.2 12 H12 V1 Z" fill="#db4437"/><circle cx="12" cy="12" r="5.2" fill="#fff"/><circle cx="12" cy="12" r="4.1" fill="#4285f4"/><circle cx="15.5" cy="16" r="7.5" fill="#3a6ad8"/><circle cx="13" cy="12.5" r="4.5" fill="#4a7ae8"/><path d="M14 15 L17 19 L12 19 Z" fill="#e07040"/></svg><svg class="abs" style="left:895px;top:985px" width="24" height="24" viewBox="0 0 24 24"><defs><linearGradient id="edg" x1="0" y1="0" x2="1" y2="1"><stop offset="0" stop-color="#35c1f1"/><stop offset="0.6" stop-color="#1b78d0"/><stop offset="1" stop-color="#114a9a"/></linearGradient><linearGradient id="edg2" x1="0" y1="0" x2="1" y2="0"><stop offset="0" stop-color="#7ed07a"/><stop offset="1" stop-color="#36b37e"/></linearGradient></defs><path d="M12 1 A11 11 0 0 1 23 12 Q23 16 18 16 H11 Q10 19 14 21 A11 11 0 0 1 1 12 A11 11 0 0 1 12 1 Z" fill="url(#edg)"/><path d="M12 1 A11 11 0 0 1 23 12 Q23 16 18 16 H12.5 Q17 14 15.5 10 Q13 6 8 8 Q10 1 12 1Z" fill="url(#edg2)"/><circle cx="12.5" cy="12.5" r="2.5" fill="#1a3a6a"/></svg><svg class="abs" style="left:945px;top:985px" width="24" height="24" viewBox="0 0 24 24"><circle cx="13.5" cy="3.6" r="2.2" fill="none" stroke="#2a9a4a" stroke-width="1.5"/><rect x="3" y="9.3" width="9.5" height="9.5" rx="1.5" transform="rotate(45 7.75 14)" fill="none" stroke="#3a6ab0" stroke-width="1.5"/><rect x="9.8" y="8.8" width="10.5" height="10.5" rx="1.5" transform="rotate(45 15 14)" fill="none" stroke="#2a9a4a" stroke-width="1.5"/></svg><div class="abs" style="left:837px;top:1014px;width:41px;height:3px;background:#79b0e2"></div><div class="abs" style="left:887px;top:1014px;width:41px;height:3px;background:#79b0e2"></div><div class="abs" style="left:937px;top:1014px;width:41px;height:3px;background:#79b0e2"></div><svg class="abs" style="left:1266px;top:985px" width="24" height="24" viewBox="0 0 24 24"><defs><linearGradient id="sun" x1="0" y1="0" x2="1" y2="1"><stop offset="0" stop-color="#f6b63a"/><stop offset="1" stop-color="#e8882a"/></linearGradient><linearGradient id="cld" x1="0" y1="0" x2="0" y2="1"><stop offset="0" stop-color="#e6f0f8"/><stop offset="1" stop-color="#a8cce8"/></linearGradient></defs><circle cx="10.7" cy="11.4" r="9.5" fill="url(#sun)"/><circle cx="19.2" cy="3.3" r="2.8" fill="#d8402a"/><path d="M5 23.4 Q2.5 23.4 2.9 20.5 Q3.3 18 6 18.2 Q6.5 14.5 10 14.2 Q12 11.7 15.5 12.5 Q19 13.5 19 16.5 Q22.3 17 22.1 20.3 Q22 23.4 18.5 23.4 Z" fill="url(#cld)"/></svg><div class="t" style="left:1297px;top:991px;font-size:14.6px;color:#dcdcdc;letter-spacing:-0.2px;line-height:16px">29°C&nbsp; Partly sunny</div><svg class="abs" style="left:1430px;top:992px" width="14" height="9" viewBox="0 0 14 9"><path d="M1 8 L7 1.5 L13 8" fill="none" stroke="#e0e0e0" stroke-width="1.3"/></svg><svg class="abs" style="left:1452px;top:988px" width="18" height="18" viewBox="0 0 24 24"><path d="M2 3.5 L22 1 V19 L2 21 Z" fill="none" stroke="#e0e0e0" stroke-width="1.3"/><path d="M7 10 A4.5 4.5 0 0 1 15 8.5 M16 13 A4.5 4.5 0 0 1 8 14.5" fill="none" stroke="#e0e0e0" stroke-width="1.3"/><path d="M14 6 L15.5 9 L12.5 9.5" fill="none" stroke="#e0e0e0" stroke-width="1.2"/><circle cx="18.5" cy="18.5" r="4.5" fill="#3a8ee8"/></svg><div class="abs" style="left:1473px;top:977px;width:24px;height:40px;background:#1f2a34"></div><svg class="abs" style="left:1477px;top:989px" width="16" height="16" viewBox="0 0 24 24"><rect x="1" y="7" width="20" height="10" fill="none" stroke="#f0f0f0" stroke-width="1.3"/><rect x="21.5" y="10" width="1.6" height="4" fill="#f0f0f0"/><rect x="3" y="9" width="12" height="6" fill="#f0f0f0"/></svg><svg class="abs" style="left:1502px;top:990px" width="15" height="15" viewBox="0 0 24 24"><g fill="none" stroke="#d8d8d8" stroke-width="1.3"><path d="M2 20 A18 18 0 0 1 20 2"/><path d="M6 20 A14 14 0 0 1 20 6"/><path d="M10 20 A10 10 0 0 1 20 10"/><path d="M14 20 A6 6 0 0 1 20 14"/></g><circle cx="19" cy="19" r="1.8" fill="#d8d8d8"/></svg><svg class="abs" style="left:1526px;top:989px" width="14" height="17" viewBox="4 0 16 24"><ellipse cx="12" cy="12" rx="7.5" ry="11" fill="#1a82e8"/><path d="M8.5 8.5 L15 15 L12 18 V6 L15 9 L8.5 15.5" fill="none" stroke="#fff" stroke-width="1.2"/></svg><svg class="abs" style="left:1548px;top:988px" width="17" height="17" viewBox="0 0 24 24"><path d="M2 9 H6 L12 3.5 V20.5 L6 15 H2 Z" fill="none" stroke="#dcdcdc" stroke-width="1.3"/><g fill="none" stroke="#dcdcdc" stroke-width="1.3"><path d="M15 9 Q16.5 12 15 15"/><path d="M18 6.5 Q21 12 18 17.5"/><path d="M21 4 Q25 12 21 20" opacity="0.5"/></g></svg><div class="t" style="left:1576px;top:992px;font-size:12.6px;color:#e6e6e6;letter-spacing:-0.6px;line-height:13px">ENG</div><div class="abs" style="left:1606px;top:977px;width:73px;height:40px;background:#1e2327"></div><div class="t" style="left:1606px;top:982px;font-size:12px;color:#e8e8e8;line-height:12px;width:73px"><div style="width:73px;text-align:center">15:43</div></div><div class="t" style="left:1606px;top:1000px;font-size:12px;color:#e8e8e8;line-height:12px;width:73px"><div style="width:73px;text-align:center">03-01-2023</div></div><svg class="abs" style="left:1691px;top:988px" width="18" height="18" viewBox="0 0 24 24"><path d="M2 2 H22 V17 H14 L12 19.5 L10 17 H2 Z" fill="none" stroke="#e6e6e6" stroke-width="1.3"/></svg><div class="abs" style="left:1728px;top:977px;width:1px;height:40px;background:#6a7a8a"></div><svg class="abs" style="left:24px;top:1038px" width="24" height="24" viewBox="0 0 24 24"><path d="M1 4 L10.5 2.6 V11.3 H1 Z M11.5 2.5 L23 0.8 V11.3 H11.5 Z M1 12.3 H10.5 V21 L1 19.7 Z M11.5 12.3 H23 V22.8 L11.5 21.2 Z" fill="#ffffff"/></svg><div class="abs" style="left:72px;top:1020px;width:516px;height:60px;background:#333333;border-top:2px solid #545454;border-left:2px solid #545454;border-bottom:2px solid #545454;border-right:2px solid #5a5a5a"></div><svg class="abs" style="left:88.6px;top:1034.7px" width="28.4" height="28.4" viewBox="0 0 24 24"><circle cx="14.5" cy="9.5" r="6.5" fill="none" stroke="#f4f4f4" stroke-width="1.6"/><path d="M10 14 L2 22" stroke="#f4f4f4" stroke-width="1.6"/></svg><div class="t" style="left:133px;top:1040px;font-size:22px;color:#e4e4e4;line-height:24px">Type here to search</div><svg class="abs" style="left:466px;top:1021px" width="120" height="59" viewBox="0 0 100 48" preserveAspectRatio="none"><ellipse cx="56" cy="60" rx="52" ry="24" fill="#4aa3e8"/><path d="M40 34 Q60 22 80 30 L100 14 V48 H60 Q70 40 60 36 Z" fill="#5aa830"/><path d="M36 36 Q48 30 62 36 Q52 42 36 36Z" fill="#7ac040"/><path d="M66 48 Q80 30 100 26 V48 Z" fill="#68b838"/><ellipse cx="28" cy="12" rx="9" ry="5" fill="#c8e0f0"/><ellipse cx="22" cy="14" rx="6" ry="3.5" fill="#b8d4ec"/><g fill="#8a5a3a"><path d="M44 18 H54 L51 15 H47Z"/><path d="M43 23 H55 L52 20 H46Z"/><path d="M42 29 H56 L53 25 H45Z"/></g><rect x="47" y="16" width="4" height="18" fill="#e8b868"/><g fill="#8a5a3a"><path d="M72 6 H80 L78 3 H74Z"/><path d="M71 11 H81 L79 8 H73Z"/><path d="M70 16 H82 L80 13 H72Z"/><path d="M69 21 H83 L81 18 H71Z"/><path d="M68 27 H84 L82 23 H70Z"/><path d="M67 34 H85 L83 29 H69Z"/></g><rect x="74" y="4" width="4" height="40" fill="#e8b868" opacity="0.85"/><g fill="#8a5a3a"><path d="M72 6 H80 L78 3 H74Z"/><path d="M71 11 H81 L79 8 H73Z"/><path d="M70 16 H82 L80 13 H72Z"/><path d="M69 21 H83 L81 18 H71Z"/><path d="M68 27 H84 L82 23 H70Z"/><path d="M67 34 H85 L83 29 H69Z"/></g></svg><div class="abs" style="left:1190px;top:1020px;width:66px;height:60px;background:#333"></div><div class="abs" style="left:1256px;top:1020px;width:7px;height:60px;background:#262626"></div><svg class="abs" style="left:611px;top:1037px" width="26" height="25" viewBox="0 0 26 25"><g fill="none" stroke="#ffffff" stroke-width="1.3"><path d="M0.7 4.2 V1.2 H17 V4.2"/><rect x="1.2" y="7.2" width="15.3" height="10.2"/><path d="M0.7 20.3 V23.6 H17 V20.3"/><path d="M23.6 0.5 V24.5"/></g><rect x="22" y="8.2" width="3.2" height="3.2" fill="#ffffff"/></svg><svg class="abs" style="left:683px;top:1032px" width="36" height="36" viewBox="0 0 24 24"><path d="M1.5 4 Q1.5 3 2.5 3 H8.5 L10 4.5 H21.5 Q22.5 4.5 22.5 5.5 V20 Q22.5 21 21.5 21 H2.5 Q1.5 21 1.5 20 Z" fill="#f7c548"/><path d="M1.5 6.5 H22.5 V20 Q22.5 21 21.5 21 H2.5 Q1.5 21 1.5 20 Z" fill="#fcd462"/><path d="M6 22 V14.5 Q6 13 7.5 13 H16.5 Q18 13 18 14.5 V22 H15 V17 H9 V22 Z" fill="#3c8ad8"/><rect x="9" y="17" width="6" height="4" fill="#f4b840"/></svg><svg class="abs" style="left:758px;top:1032px" width="36" height="36" viewBox="0 0 24 24"><path d="M8 6 V3.5 Q8 2 9.5 2 H14.5 Q16 2 16 3.5 V6" fill="none" stroke="#2a96e0" stroke-width="1.4"/><path d="M2.5 6 H21.5 V20 Q21.5 23 18.5 23 H5.5 Q2.5 23 2.5 20 Z" fill="#f2f2f2"/><rect x="8" y="10" width="3.6" height="3.6" fill="#f25022"/><rect x="12.4" y="10" width="3.6" height="3.6" fill="#7fba00"/><rect x="8" y="14.4" width="3.6" height="3.6" fill="#00a4ef"/><rect x="12.4" y="14.4" width="3.6" height="3.6" fill="#ffb900"/></svg><svg class="abs" style="left:833px;top:1032px" width="36" height="36" viewBox="0 0 24 24"><path d="M1.5 9 L12 1.5 L22.5 9 V22 H1.5 Z" fill="#1a5fb4"/><path d="M1.5 9 H22.5 V22 H1.5 Z" fill="#2a9ae8"/><path d="M1.5 9 L12 15.5 L22.5 9 Z" fill="#f4f4f4"/><path d="M1.5 22 L12 14 L22.5 22 Z" fill="#48b4f4"/></svg><svg class="abs" style="left:908px;top:1032px" width="36" height="36" viewBox="0 0 24 24"><g fill="none" stroke="#f0f0f0" stroke-width="1.5"><path d="M7 3.5 L12 1 L20.5 5.5 V9.5"/><path d="M3.5 16 V6.5 L5.5 5.3"/><path d="M20.5 14 V17.5 L12 22.5 L6 19"/><path d="M12 6.5 L17 9.2 V15 L12 17.7 L7 15 V9.2 Z"/><path d="M7 9.2 L12 12 L17 9.2 M12 12 V17.7"/></g></svg><svg class="abs" style="left:984px;top:1032px" width="36" height="36" viewBox="0 0 24 24"><circle cx="12" cy="12" r="11" fill="#db4437"/><path d="M12 12 L2.5 17.5 A11 11 0 0 0 12 23 L 17.5 13.5 Z" fill="#0f9d58"/><path d="M12 12 L2.5 17.5 A11 11 0 0 1 2.3 6.6 L7.2 14.5 Z" fill="#0f9d58"/><path d="M12 12 L23 12 A11 11 0 0 1 12 23 L17.5 13.5 Z" fill="#ffcd40"/><path d="M12 1 A11 11 0 0 1 23 12 H12 Z" fill="#ffcd40"/><path d="M12 1 A11 11 0 0 0 2.3 6.6 L7.2 12 H12 V1 Z" fill="#db4437"/><circle cx="12" cy="12" r="5.2" fill="#fff"/><circle cx="12" cy="12" r="4.1" fill="#4285f4"/><circle cx="17.5" cy="17.5" r="6.3" fill="#8a8a8a"/><circle cx="17.5" cy="15.5" r="2.6" fill="#c8a890"/><path d="M12.5 21.5 Q17.5 15 22.5 21.5 Q17.5 25 12.5 21.5Z" fill="#6a5040"/><path d="M14.5 14 Q17.5 9.5 20.5 14 L20.5 19 L14.5 19 Z" fill="#3a2a20" opacity="0.7"/></svg><svg class="abs" style="left:1058px;top:1032px" width="36" height="36" viewBox="0 0 24 24"><circle cx="12" cy="12" r="11" fill="#db4437"/><path d="M12 12 L2.5 17.5 A11 11 0 0 0 12 23 L 17.5 13.5 Z" fill="#0f9d58"/><path d="M12 12 L2.5 17.5 A11 11 0 0 1 2.3 6.6 L7.2 14.5 Z" fill="#0f9d58"/><path d="M12 12 L23 12 A11 11 0 0 1 12 23 L17.5 13.5 Z" fill="#ffcd40"/><path d="M12 1 A11 11 0 0 1 23 12 H12 Z" fill="#ffcd40"/><path d="M12 1 A11 11 0 0 0 2.3 6.6 L7.2 12 H12 V1 Z" fill="#db4437"/><circle cx="12" cy="12" r="5.2" fill="#fff"/><circle cx="12" cy="12" r="4.1" fill="#4285f4"/></svg><svg class="abs" style="left:1130px;top:1030px" width="40" height="40" viewBox="0 0 40 40"><path d="M4 24 Q3 12 16 9 Q30 6 35 16 Q37 24 30 30 Q22 36 14 33 Q11 32 11 29 Q11 26 8 27.5 Q4 29 4 24Z" fill="#cfe3f6" stroke="#9ab8d8" stroke-width="0.6"/><circle cx="10.5" cy="21.5" r="2.2" fill="#e53a2a"/><circle cx="15.5" cy="15" r="2.1" fill="#4aa84a"/><circle cx="23" cy="12.5" r="2.4" fill="#f2b824"/><circle cx="16" cy="25" r="1.4" fill="#000"/><path d="M35 6 L19.5 36.5" stroke="#e8962a" stroke-width="2.4" stroke-linecap="round"/><path d="M33 8 L37 1.5 L40 4.5 Z" fill="#e0c080"/><path d="M33.5 7 L35 9" stroke="#888" stroke-width="1.5"/></svg><svg class="abs" style="left:1203px;top:1028px" width="48" height="48" viewBox="0 0 40 40"><circle cx="20" cy="8.6" r="6.3" fill="#ffffff"/><rect x="6" y="17" width="15.5" height="15.5" rx="3.5" transform="rotate(45 13.8 24.3)" fill="#ffffff"/><rect x="16.5" y="16.6" width="16.5" height="16.5" rx="3.5" transform="rotate(45 24.8 24.3)" fill="#ffffff"/><circle cx="20" cy="8.6" r="3.4" fill="#fff" stroke="#1a9a3a" stroke-width="2"/><rect x="8.3" y="19.3" width="11" height="11" rx="1.8" transform="rotate(45 13.8 24.8)" fill="#fff" stroke="#1d63c8" stroke-width="2"/><rect x="18.6" y="18.9" width="12.4" height="12.4" rx="1.8" transform="rotate(45 24.8 25.1)" fill="#fff" stroke="#1a9a3a" stroke-width="2"/></svg><div class="abs" style="left:670px;top:1077px;width:62px;height:3px;background:#76b9ed"></div><div class="abs" style="left:971px;top:1077px;width:61px;height:3px;background:#76b9ed"></div><div class="abs" style="left:1046px;top:1077px;width:62px;height:3px;background:#76b9ed"></div><div class="abs" style="left:1121px;top:1077px;width:62px;height:3px;background:#76b9ed"></div><div class="abs" style="left:1190px;top:1077px;width:66px;height:3px;background:#76b9ed"></div><svg class="abs" style="left:1384px;top:1031px" width="38" height="38" viewBox="0 0 24 24"><defs><linearGradient id="sun" x1="0" y1="0" x2="1" y2="1"><stop offset="0" stop-color="#f6b63a"/><stop offset="1" stop-color="#e8882a"/></linearGradient><linearGradient id="cld" x1="0" y1="0" x2="0" y2="1"><stop offset="0" stop-color="#e6f0f8"/><stop offset="1" stop-color="#a8cce8"/></linearGradient></defs><circle cx="10.7" cy="11.4" r="9.5" fill="url(#sun)"/><circle cx="19.2" cy="3.3" r="2.8" fill="#d8402a"/><path d="M5 23.4 Q2.5 23.4 2.9 20.5 Q3.3 18 6 18.2 Q6.5 14.5 10 14.2 Q12 11.7 15.5 12.5 Q19 13.5 19 16.5 Q22.3 17 22.1 20.3 Q22 23.4 18.5 23.4 Z" fill="url(#cld)"/></svg><div class="t" style="left:1431px;top:1041px;font-size:20.5px;color:#f2f2f2;line-height:22px">29°C</div><svg class="abs" style="left:1500px;top:1043px" width="20" height="13" viewBox="0 0 20 13"><path d="M1 12 L10 2 L19 12" fill="none" stroke="#f0f0f0" stroke-width="1.7"/></svg><svg class="abs" style="left:1532px;top:1036px" width="28" height="28" viewBox="0 0 24 24"><path d="M2 3.5 L22 1 V19 L2 21 Z" fill="none" stroke="#f0f0f0" stroke-width="1.3"/><path d="M7 10 A4.5 4.5 0 0 1 15 8.5 M16 13 A4.5 4.5 0 0 1 8 14.5" fill="none" stroke="#f0f0f0" stroke-width="1.3"/><path d="M14 6 L15.5 9 L12.5 9.5" fill="none" stroke="#f0f0f0" stroke-width="1.2"/><circle cx="18.5" cy="18.5" r="4.5" fill="#2a7ad8"/></svg><svg class="abs" style="left:1570px;top:1038px" width="24" height="24" viewBox="0 0 24 24"><rect x="1" y="7" width="20" height="10" fill="none" stroke="#f4f4f4" stroke-width="1.3"/><rect x="21.5" y="10" width="1.6" height="4" fill="#f4f4f4"/><rect x="3" y="9" width="6" height="6" fill="#f4f4f4"/></svg><svg class="abs" style="left:1609px;top:1039px" width="22" height="22" viewBox="0 0 24 24"><g fill="none" stroke="#e8e8e8" stroke-width="1.3"><path d="M2 20 A18 18 0 0 1 20 2"/><path d="M6 20 A14 14 0 0 1 20 6"/><path d="M10 20 A10 10 0 0 1 20 10"/><path d="M14 20 A6 6 0 0 1 20 14"/></g><circle cx="19" cy="19" r="1.8" fill="#e8e8e8"/></svg><svg class="abs" style="left:1641px;top:1038px" width="25" height="25" viewBox="0 0 24 24"><path d="M2 9 H6 L12 3.5 V20.5 L6 15 H2 Z" fill="none" stroke="#e8e8e8" stroke-width="1.3"/><g fill="none" stroke="#e8e8e8" stroke-width="1.3"><path d="M15 9 Q16.5 12 15 15"/><path d="M18 6.5 Q21 12 18 17.5"/><path d="M21 4 Q25 12 21 20" opacity="0.5"/></g></svg><div class="t" style="left:1682px;top:1042px;font-size:16.2px;color:#f2f2f2;line-height:18px">ENG</div><div class="t" style="left:1736px;top:1028px;font-size:18.5px;color:#f2f2f2;line-height:19px"><div style="width:93px;text-align:center">15:44</div></div><div class="t" style="left:1735px;top:1056px;font-size:18.3px;color:#f2f2f2;line-height:19px"><div style="width:95px;text-align:center">03-01-2023</div></div><svg class="abs" style="left:1858px;top:1037px" width="26" height="26" viewBox="0 0 24 24"><path d="M1 1 H23 V17 H12 L7 21 V17 H1 Z" fill="#ffffff"/><path d="M5 5 H19 M5 8.5 H19 M5 12 H14" stroke="#000" stroke-width="1.1"/></svg><div class="abs" style="left:1870px;top:1050px;width:23px;height:23px;border-radius:50%;background:#2b2b2b;border:1.5px solid #5a5a5a;color:#fff;font-size:15px;font-weight:bold;text-align:center;line-height:20px">4</div><div class="abs" style="left:1911px;top:1020px;width:1px;height:60px;background:#5a5a5a"></div><div class="abs" style="left:1424px;top:906px;width:40px;height:33px;background:#f2f2f2;border-radius:17px 0 0 17px;box-shadow:0 0 2px rgba(0,0,0,.3)"></div><svg class="abs" style="left:1436px;top:917px" width="8" height="12" viewBox="0 0 8 12"><path d="M1.5 1.5 L6 6 L1.5 10.5" fill="none" stroke="#333" stroke-width="1.5"/></svg><div class="abs" style="left:1453px;top:876px;width:280px;height:96px;border-radius:7px;background:#e6e6e6;overflow:hidden;box-shadow:0 0 2px rgba(0,0,0,.35)"><div class="abs" style="left:0;top:30px;width:280px;height:35px;background:#3b4047"></div></div><svg class="abs" style="left:1457px;top:880px" width="22" height="22" viewBox="0 0 24 24"><circle cx="13.5" cy="3.6" r="2.2" fill="none" stroke="#2aa84a" stroke-width="1.4"/><rect x="3" y="9.3" width="9.5" height="9.5" rx="1.5" transform="rotate(45 7.75 14)" fill="#eaeaea" stroke="#3a72b0" stroke-width="1.4"/><rect x="9.8" y="8.8" width="10.5" height="10.5" rx="1.5" transform="rotate(45 15 14)" fill="#eaeaea" stroke="#2aa84a" stroke-width="1.4"/></svg><div class="t" style="left:1483px;top:884px;font-size:14.2px;color:#111;letter-spacing:0.1px;line-height:15px">Zoho Assist</div><svg class="abs" style="left:1710px;top:885px" width="11" height="11" viewBox="0 0 11 11"><path d="M1 1 L10 10 M10 1 L1 10" stroke="#111" stroke-width="1.8"/></svg><svg class="abs" style="left:1461px;top:913px" width="21" height="22" viewBox="0 0 21 22"><circle cx="10.5" cy="6.5" r="5" fill="none" stroke="#e8e8e8" stroke-width="1.5"/><path d="M1 21 Q1 13 10.5 13 Q20 13 20 21" fill="none" stroke="#e8e8e8" stroke-width="1.5"/></svg><svg class="abs" style="left:1495px;top:914px" width="21" height="19" viewBox="0 0 21 19"><path d="M1.5 1.5 H19.5 V13 H7 L2 17.5 V1.5 Z" fill="none" stroke="#e8e8e8" stroke-width="1.4"/><path d="M5 5 H15 M5 8.5 H11" stroke="#e8e8e8" stroke-width="1.4"/></svg><svg class="abs" style="left:1530px;top:914px" width="22" height="20" viewBox="0 0 22 20"><path d="M8 14 L18.5 3 L21 5.5 L10.5 16.5 L7.5 17 Z" fill="none" stroke="#e8e8e8" stroke-width="1.4"/><path d="M1 10 Q2 6 3.5 10 Q5 17 4 18 Q3 19 8 17" fill="none" stroke="#e8e8e8" stroke-width="1.3"/></svg><svg class="abs" style="left:1566px;top:913px" width="19" height="20" viewBox="0 0 19 20"><path d="M1 17 V1 H13" fill="none" stroke="#e8e8e8" stroke-width="1.3"/><rect x="3.5" y="3.5" width="14" height="16" fill="none" stroke="#e8e8e8" stroke-width="1.4"/><path d="M7 8 H14 M7 11 H14 M7 14 H14" stroke="#e8e8e8" stroke-width="1.3"/></svg><svg class="abs" style="left:1709px;top:921px" width="14" height="6" viewBox="0 0 14 6"><circle cx="2" cy="3" r="1.3" fill="#e8e8e8"/><circle cx="7" cy="3" r="1.3" fill="#e8e8e8"/><circle cx="12" cy="3" r="1.3" fill="#e8e8e8"/></svg><div class="abs" style="left:1464px;top:950px;width:12px;height:12px;background:#1fa54a;border-radius:50%"></div><div class="t" style="left:1486px;top:949px;font-size:14.2px;color:#111;letter-spacing:0.25px;line-height:15px">jonathan</div><svg class="abs" style="left:1685px;top:950px" width="16" height="14" viewBox="0 0 16 14"><rect x="1" y="1" width="14" height="9" fill="#f4f4f4" stroke="#777" stroke-width="1.2"/><rect x="4" y="11.5" width="8" height="1.5" fill="#888"/></svg><div class="abs" style="left:1711px;top:950px;width:3.2px;height:11px;background:#111"></div><div class="abs" style="left:1717px;top:950px;width:3.2px;height:11px;background:#111"></div>
</body></html>
